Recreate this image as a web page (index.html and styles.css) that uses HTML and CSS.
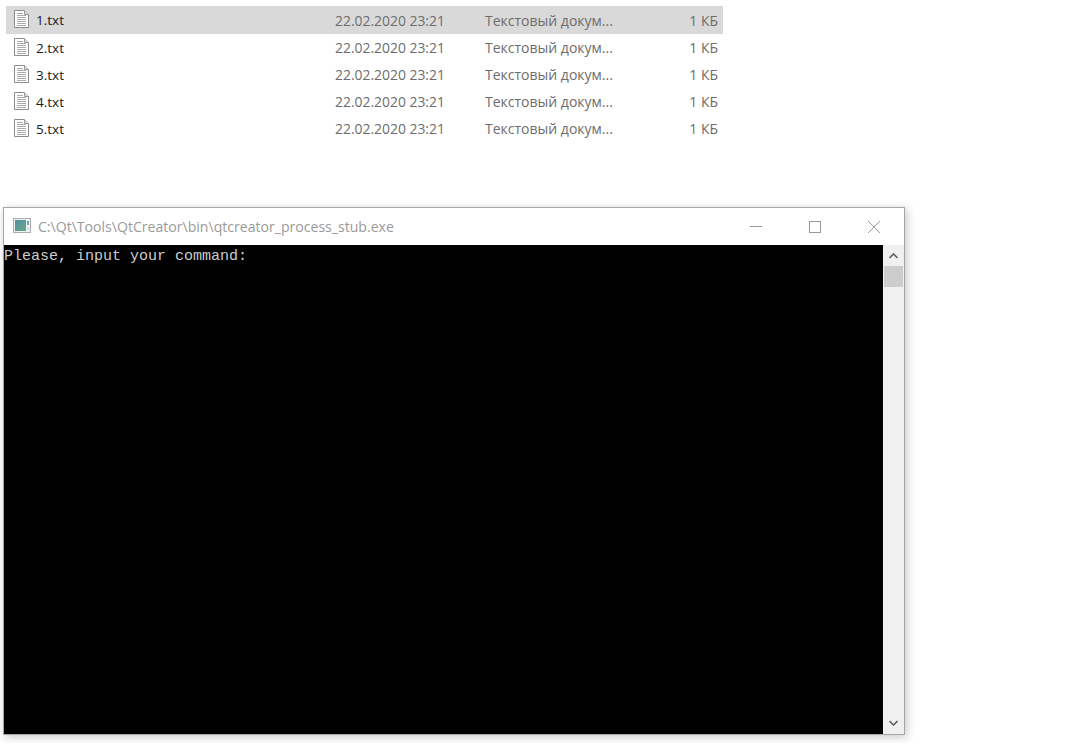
FILE: index.html
```html
<!DOCTYPE html>
<html lang="ru">
<head>
<meta charset="utf-8">
<title>Files and console</title>
<link rel="stylesheet" href="styles.css">
</head>
<body>
<svg class="defs" width="0" height="0" aria-hidden="true">
  <symbol id="txt" viewBox="0 0 15 18">
    <path d="M.5.5h10l4 4v13H.5z" fill="#fff" stroke="#8c8c8c"/>
    <path d="M10.5.5v4h4" fill="#e4e4e4" stroke="#9a9a9a"/>
    <path d="M3 3.5h6M3 5.5h9M3 7.5h9M3 9.5h9M3 11.5h9M3 13.5h9M3 15.5h9" stroke="#ababab"/>
  </symbol>
</svg>
<ul class="files">
  <li class="file selected"><svg class="ficon"><use href="#txt"/></svg><span class="name">1.txt</span><span class="date">22.02.2020 23:21</span><span class="type">Текстовый докум...</span><span class="size">1 КБ</span></li>
  <li class="file"><svg class="ficon"><use href="#txt"/></svg><span class="name">2.txt</span><span class="date">22.02.2020 23:21</span><span class="type">Текстовый докум...</span><span class="size">1 КБ</span></li>
  <li class="file"><svg class="ficon"><use href="#txt"/></svg><span class="name">3.txt</span><span class="date">22.02.2020 23:21</span><span class="type">Текстовый докум...</span><span class="size">1 КБ</span></li>
  <li class="file"><svg class="ficon"><use href="#txt"/></svg><span class="name">4.txt</span><span class="date">22.02.2020 23:21</span><span class="type">Текстовый докум...</span><span class="size">1 КБ</span></li>
  <li class="file"><svg class="ficon"><use href="#txt"/></svg><span class="name">5.txt</span><span class="date">22.02.2020 23:21</span><span class="type">Текстовый докум...</span><span class="size">1 КБ</span></li>
</ul>
<section class="window">
  <header class="titlebar">
    <svg class="appicon" width="18" height="15" viewBox="0 0 18 15">
      <defs><linearGradient id="g" x1="0" y1="0" x2="1" y2="1"><stop offset="0" stop-color="#4f8fa6"/><stop offset="1" stop-color="#6aa883"/></linearGradient></defs>
      <rect x=".5" y=".5" width="17" height="14" fill="#eef2f2" stroke="#a8aeb2"/>
      <rect x="2" y="2" width="11" height="11" fill="url(#g)"/>
      <rect x="14" y="3" width="2" height="4" fill="#7fa3ab"/>
      <rect x="14" y="9" width="2" height="3" fill="#d8dfdf"/>
    </svg>
    <span class="wtitle">C:\Qt\Tools\QtCreator\bin\qtcreator_process_stub.exe</span>
    <div class="controls">
      <span class="ctl"><svg width="12" height="12" viewBox="0 0 12 12"><path d="M0 5.5h12" stroke="#9a9a9a"/></svg></span>
      <span class="ctl"><svg width="12" height="12" viewBox="0 0 12 12"><rect x=".5" y=".5" width="11" height="11" fill="none" stroke="#9a9a9a"/></svg></span>
      <span class="ctl"><svg width="12" height="12" viewBox="0 0 12 12"><path d="M0 0l12 12M12 0L0 12" stroke="#9a9a9a"/></svg></span>
    </div>
  </header>
  <div class="body">
    <pre class="console">Please, input your command:</pre>
    <div class="scrollbar">
      <svg class="arrow up" width="9" height="6" viewBox="0 0 9 6"><path d="M.5 5l4-4 4 4" fill="none" stroke="#606060" stroke-width="1.6"/></svg>
      <div class="thumb"></div>
      <div class="track"></div>
      <svg class="arrow down" width="9" height="6" viewBox="0 0 9 6"><path d="M.5 1l4 4 4-4" fill="none" stroke="#606060" stroke-width="1.6"/></svg>
    </div>
  </div>
</section>
</body>
</html>
```
FILE: styles.css
```css
html, body {
  margin: 0;
  padding: 0;
  background: #fff;
  overflow: hidden;
}
body {
  height: 743px;
  font-family: "Open Sans", "Noto Sans", sans-serif;
}
.defs { display: block; height: 0; }
.files {
  list-style: none;
  margin: 6px 0 0 6px;
  padding: 0;
  width: 717px;
}
.file {
  display: flex;
  align-items: center;
  height: 27px;
  font-size: 14px;
  color: #6d6d6d;
}
.file.selected {
  height: 28px;
  background: #d9d9d9;
}
.ficon {
  width: 15px;
  height: 18px;
  margin: 0 7px 2px 8px;
  flex: none;
}
.name { width: 299px; color: #1a1a1a; font-size: 13.5px; }
.date { width: 150px; font-size: 13.9px; }
.type { width: 170px; white-space: nowrap; }
.size { flex: 1; text-align: right; padding-right: 5px; }
.window {
  margin: 65px 0 0 3px;
  width: 900px;
  height: 526px;
  border: 1px solid #a6a6a6;
  box-shadow: 2px 2px 9px rgba(0, 0, 0, .22);
  display: flex;
  flex-direction: column;
  background: #fff;
}
.titlebar {
  height: 37px;
  display: flex;
  align-items: center;
  padding-left: 9px;
  flex: none;
}
.appicon { flex: none; margin: 0 7px 2px 0; }
.wtitle { font-size: 14.08px; color: #9a9a9a; white-space: nowrap; }
.controls { margin-left: auto; display: flex; padding-right: 1px; }
.ctl {
  width: 59px;
  display: flex;
  justify-content: center;
}
.body { flex: 1; display: flex; min-height: 0; }
.console {
  flex: 1;
  margin: 0;
  padding-top: 2px;
  background: #000;
  color: #ccc;
  font: 15px/20px "Liberation Mono", monospace;
}
.scrollbar {
  width: 21px;
  background: #f0f0f0;
  display: flex;
  flex-direction: column;
  align-items: center;
}
.arrow { flex: none; }
.up { margin: 8px 0 7px; }
.down { margin-bottom: 8px; }
.thumb { width: 19px; height: 21px; background: #cdcdcd; flex: none; }
.track { flex: 1; }
```
